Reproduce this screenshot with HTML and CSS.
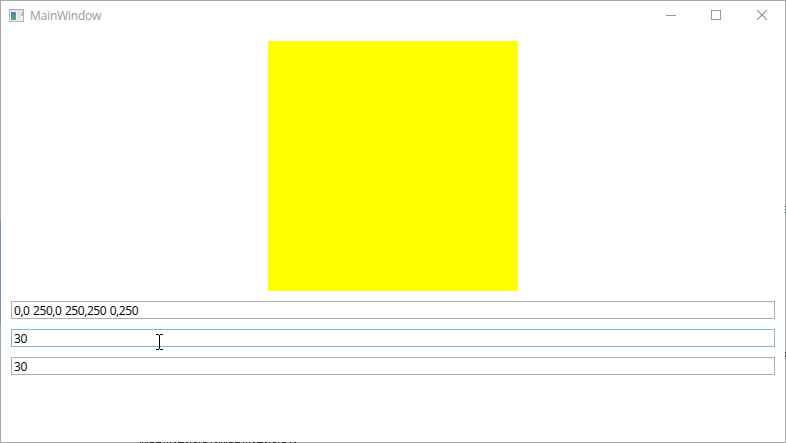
FILE: index.html
```
<!DOCTYPE html>
<html lang="en">
<head>
<meta charset="utf-8">
<title>MainWindow</title>
<link rel="stylesheet" href="styles.css">
</head>
<body>
<div class="window">
  <header class="titlebar">
    <svg class="app-icon" width="15" height="13" viewBox="0 0 15 13" shape-rendering="crispEdges">
      <defs><linearGradient id="pane" x1="0" y1="0" x2="1" y2="1"><stop offset="0" stop-color="#4f7fae"/><stop offset="1" stop-color="#58a987"/></linearGradient></defs>
      <rect x=".5" y=".5" width="14" height="12" fill="#f1f2f4" stroke="#b0b3b7"/>
      <path d="M1 1.5h13" stroke="#d5d8dc"/>
      <rect x="2" y="3" width="5" height="8" fill="url(#pane)"/>
      <rect x="8" y="3" width="3" height="8" fill="#dfe2e6"/>
      <rect x="12" y="3" width="2" height="4" fill="#a5d0bd"/>
    </svg>
    <h1 class="title">MainWindow</h1>
    <div class="controls">
      <svg width="46" height="30" viewBox="0 0 46 30" shape-rendering="crispEdges"><path d="M17 14.5h10" stroke="#999"/></svg>
      <svg width="46" height="30" viewBox="0 0 46 30" shape-rendering="crispEdges"><rect x="17.5" y="9.5" width="9" height="9" fill="none" stroke="#999"/></svg>
      <svg width="46" height="30" viewBox="0 0 46 30"><path d="M18.1 9.1l9.8 9.8M27.9 9.1l-9.8 9.8" stroke="#8c8c8c" stroke-width="1.1"/></svg>
    </div>
  </header>
  <main class="content">
    <div class="shape"></div>
    <div class="field">0,0 250,0 250,250 0,250</div>
    <div class="field active">30</div>
    <div class="field">30</div>
  </main>
  <i class="edge-left"></i>
  <i class="edge-right upper"></i>
  <i class="edge-right lower"></i>
  <svg class="edge-bottom" width="156" height="1"><path d="M0 .5h156" stroke="#222" stroke-dasharray="1 1 1 2 1 1 1 2 4 2 5 3 1 2 1 2 1 3 2 2 6 2 2 2 1 3 3 2 1 3 4 4 1 3 2 2"/></svg>
  <svg class="cursor" width="7" height="16" viewBox="0 0 7 16" shape-rendering="crispEdges"><path d="M0 .5h3M4 .5h3M3.5 1v14M0 15.5h3M4 15.5h3" stroke="#000"/></svg>
</div>
</body>
</html>
```
FILE: styles.css
```
* { box-sizing: border-box; }
body {
  margin: 0;
  background: #fff;
  font-family: "Open Sans", "Noto Sans", sans-serif;
}
.window {
  position: relative;
  width: 786px;
  height: 443px;
  border: 1px solid #a8a8aa;
  background: #fff;
}
.titlebar {
  display: flex;
  height: 30px;
  padding-left: 8px;
}
.app-icon { margin-top: 8px; }
.title {
  margin: 0 0 0 6px;
  font-size: 12px;
  font-weight: 400;
  line-height: 30px;
  letter-spacing: -0.2px;
  color: #999;
}
.controls {
  display: flex;
  margin-left: auto;
}
.controls svg { width: 46px; margin-right: -1px; }
.controls svg:last-child { margin-right: 0; }
.content {
  display: flex;
  flex-direction: column;
  gap: 10px;
  padding: 10px;
}
.shape {
  align-self: center;
  width: 250px;
  height: 250px;
  background: #ff0;
}
.field {
  height: 18px;
  border: 1px solid #abadb3;
  padding-left: 2px;
  font-size: 12px;
  line-height: 17px;
  color: #000;
  letter-spacing: -0.43px;
  word-spacing: 0.8px;
  white-space: pre;
}
.active { border-color: #7eb4ea; }
.edge-left {
  position: absolute;
  left: -1px;
  top: 218px;
  width: 1px;
  height: 104px;
  background: #7893c0;
}
.edge-right {
  position: absolute;
  right: -1px;
  width: 1px;
}
.upper {
  top: 205px;
  height: 7px;
  background: linear-gradient(#3f6280 1px, #a5b7c8 1px 3px, #666 3px 4px, #a5b7c8 4px 6px, #3f6280 6px);
}
.lower {
  top: 351px;
  height: 5px;
  background: linear-gradient(#333 1px, #777 1px 3px, #333 3px);
}
.edge-bottom {
  position: absolute;
  left: 139px;
  bottom: -1px;
}
.cursor {
  position: absolute;
  left: 155px;
  top: 333px;
}
```
